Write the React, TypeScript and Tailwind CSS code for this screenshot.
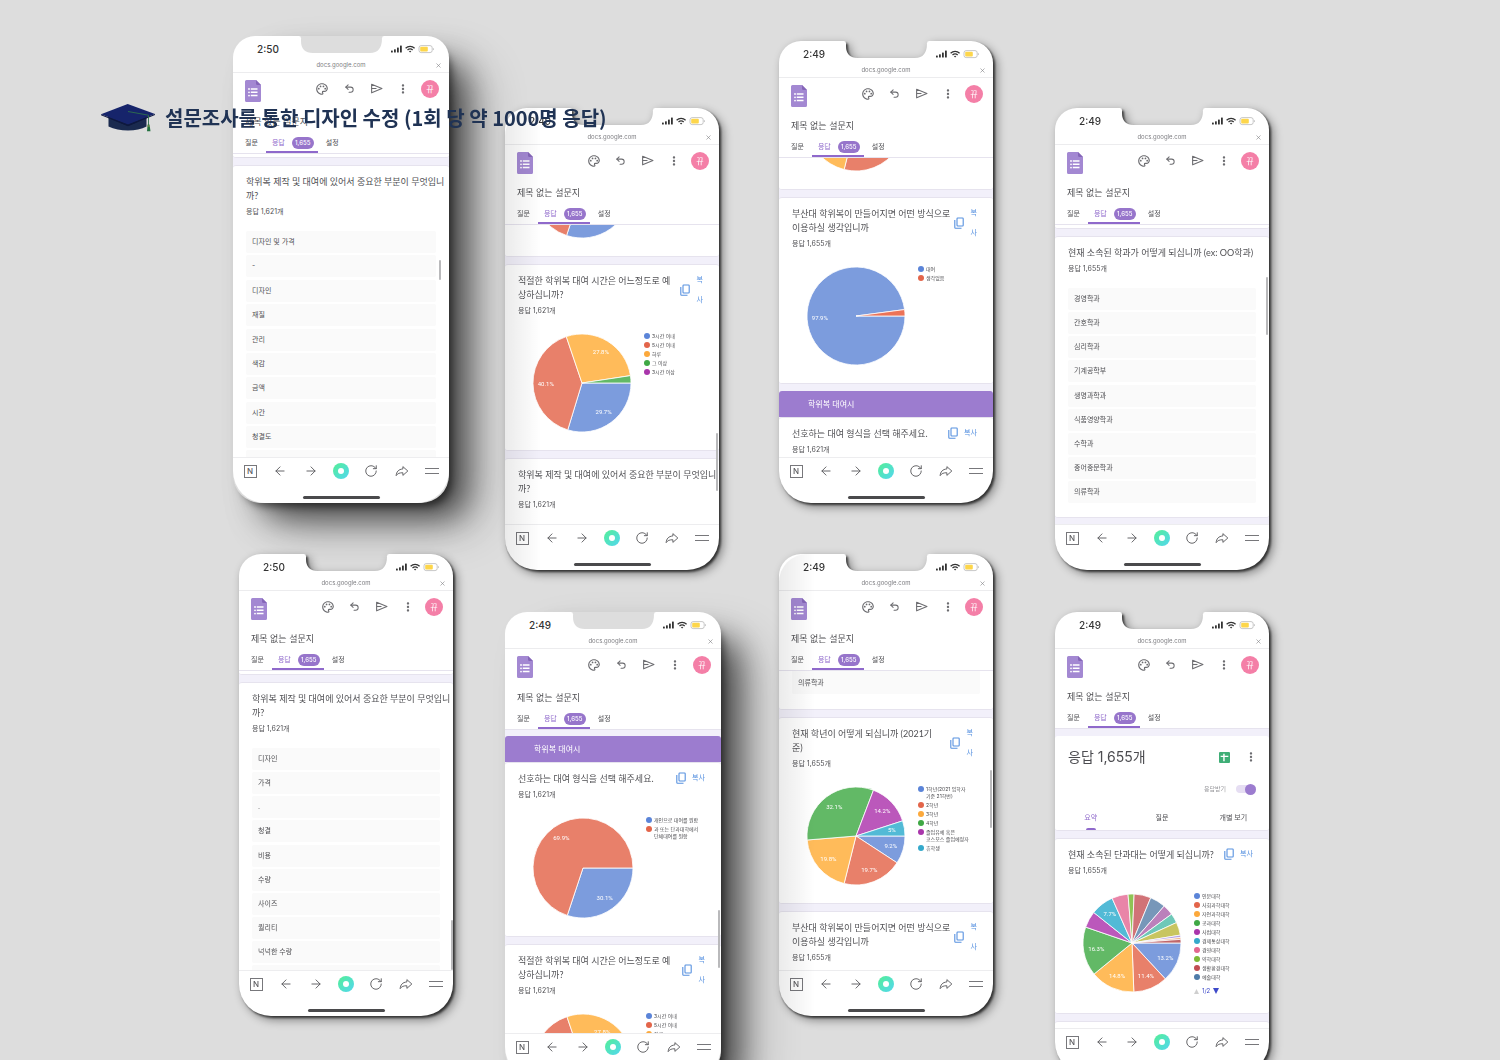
import React from "react";
import { ArrowLeft, ArrowRight, RotateCw, Undo2, X } from "lucide-react";
import { MdMoreVert, MdOutlinePalette } from "react-icons/md";

const BLUE = "#7c9cdd";
const RED = "#e8806a";
const ORANGE = "#ffbb5a";
const GREEN = "#62b966";
const PURPLE = "#bb58bb";
const CYAN = "#52bad6";

type Slice = { value: number; color: string; label?: string };
type LegendItem = { color: string; text: string };

const pieRental: Slice[] = [
  { value: 30.1, color: BLUE, label: "30.1%" },
  { value: 69.9, color: RED, label: "69.9%" },
];
const pieTime: Slice[] = [
  { value: 29.7, color: BLUE, label: "29.7%" },
  { value: 40.1, color: RED, label: "40.1%" },
  { value: 27.8, color: ORANGE, label: "27.8%" },
  { value: 2.4, color: GREEN },
];
const pieUsage: Slice[] = [
  { value: 97.9, color: BLUE, label: "97.9%" },
  { value: 2.1, color: "#ec7358" },
];
const pieGrade: Slice[] = [
  { value: 9.2, color: BLUE, label: "9.2%" },
  { value: 19.7, color: RED, label: "19.7%" },
  { value: 19.8, color: ORANGE, label: "19.8%" },
  { value: 32.1, color: GREEN, label: "32.1%" },
  { value: 14.2, color: PURPLE, label: "14.2%" },
  { value: 5, color: CYAN, label: "5%" },
];
const pieCollege: Slice[] = [
  { value: 13.2, color: BLUE, label: "13.2%" },
  { value: 11.4, color: RED, label: "11.4%" },
  { value: 14.8, color: ORANGE, label: "14.8%" },
  { value: 16.3, color: GREEN, label: "16.3%" },
  { value: 5.5, color: PURPLE },
  { value: 7.7, color: CYAN, label: "7.7%" },
  { value: 5.4, color: "#e985a8" },
  { value: 2, color: "#8fc455" },
  { value: 5.6, color: "#d17377" },
  { value: 5.2, color: "#7797b9" },
  { value: 3.6, color: "#bb80bb" },
  { value: 3.2, color: "#6fc8b8" },
  { value: 4.3, color: "#c8c560" },
  { value: 0.8, color: "#b3a0e6" },
  { value: 0.6, color: "#f0a878" },
  { value: 1.2, color: "#c0676b" },
];

const legendRental: LegendItem[] = [
  { color: "#5b84d8", text: "개인으로 대여를 원함" },
  { color: "#e3654a", text: "과 또는 단과대학에서\n단체대여를 원함" },
];
const legendTime: LegendItem[] = [
  { color: "#5b84d8", text: "3시간 이내" },
  { color: "#e3654a", text: "5시간 이내" },
  { color: "#fca93c", text: "하루" },
  { color: "#3fa845", text: "그 이상" },
  { color: "#a936ab", text: "3시간 이상" },
];
const legendUsage: LegendItem[] = [
  { color: "#5b84d8", text: "대여" },
  { color: "#e3654a", text: "생각없음" },
];
const legendGrade: LegendItem[] = [
  { color: "#5b84d8", text: "1학년(2021 입학자\n기준 21학번)" },
  { color: "#e3654a", text: "2학년" },
  { color: "#fca93c", text: "3학년" },
  { color: "#3fa845", text: "4학년" },
  { color: "#a936ab", text: "졸업유예 혹은\n코스모스 졸업예정자" },
  { color: "#35a9cb", text: "휴학생" },
];
const legendCollege: LegendItem[] = [
  { color: "#5b84d8", text: "인문대학" },
  { color: "#e3654a", text: "사회과학대학" },
  { color: "#fca93c", text: "자연과학대학" },
  { color: "#3fa845", text: "공과대학" },
  { color: "#a936ab", text: "사범대학" },
  { color: "#35a9cb", text: "경제통상대학" },
  { color: "#e3678f", text: "경영대학" },
  { color: "#7db936", text: "약학대학" },
  { color: "#c14d52", text: "생활환경대학" },
  { color: "#4f7ba8", text: "예술대학" },
];

function Pie({ slices, name, large }: { slices: Slice[]; name: string; large?: boolean }) {
  const R = 49;
  const total = slices.reduce((s, x) => s + x.value, 0);
  let acc = 0;
  const parts = slices.map((s) => {
    const a0 = (acc / total) * Math.PI * 2;
    acc += s.value;
    const a1 = (acc / total) * Math.PI * 2;
    return { ...s, a0, a1, mid: (a0 + a1) / 2 };
  });
  return (
    <svg
      viewBox="-49 -49 98 98"
      className={`shrink-0 ${large ? "size-[100px]" : "size-[98px]"}`}
      role="img"
      aria-label={name}
    >
      {parts.map((p, i) => (
        <path
          key={i}
          d={`M0 0L${R * Math.cos(p.a0)} ${R * Math.sin(p.a0)}A${R} ${R} 0 ${p.a1 - p.a0 > Math.PI ? 1 : 0} 1 ${R * Math.cos(p.a1)} ${R * Math.sin(p.a1)}Z`}
          fill={p.color}
          stroke="#fff"
          strokeWidth="0.8"
          strokeLinejoin="round"
        />
      ))}
      {parts.map((p, i) =>
        p.label ? (
          <text
            key={i}
            x={R * 0.74 * Math.cos(p.mid)}
            y={R * 0.74 * Math.sin(p.mid) + 2}
            textAnchor="middle"
            fill="#fff"
            className="font-['Roboto'] text-[6px]"
          >
            {p.label}
          </text>
        ) : null
      )}
    </svg>
  );
}

function FormsIcon() {
  return (
    <svg viewBox="0 0 16 22" className="h-[22px] w-4 shrink-0" role="img" aria-label="Forms">
      <path d="M1.500 0H11l5 5v15.500a1.500 1.500 0 0 1-1.500 1.500h-13A1.500 1.500 0 0 1 0 20.500v-19A1.500 1.500 0 0 1 1.500 0Z" fill="#a388d2" />
      <path d="M11 0l5 5h-3.500A1.500 1.500 0 0 1 11 3.500Z" fill="#8566b8" />
      <g fill="#fff">
        <path d="M5.800 8.200h6.700v1.500H5.800zM5.800 11.500h6.700V13H5.800zM5.800 14.800h6.700v1.500H5.800z" />
        <circle cx="4" cy="9" r=".9" />
        <circle cx="4" cy="12.300" r=".9" />
        <circle cx="4" cy="15.600" r=".9" />
      </g>
    </svg>
  );
}

function SendIcon() {
  return (
    <svg viewBox="0 0 24 24" className="size-[13px]" fill="none" stroke="currentColor" strokeWidth="2" strokeLinejoin="round" aria-hidden="true">
      <path d="M3 4l19 8-19 8Z" />
      <path d="M3 12h9" />
    </svg>
  );
}

function ShareIcon() {
  return (
    <svg viewBox="0 0 24 24" className="size-[14px]" fill="none" stroke="currentColor" strokeWidth="1.600" strokeLinejoin="round" aria-hidden="true">
      <path d="M13.500 4.500l8.500 7.500-8.500 7.500v-4.500C8 15 4.500 16 2 20c.4-6.500 4-11 11.500-11.500Z" />
    </svg>
  );
}

function StatusIcons() {
  return (
    <svg viewBox="0 0 43 10" className="ml-[9px] h-[10px] w-[43px]" role="img" aria-label="배터리 및 신호">
      <g fill="#333">
        <rect x="0" y="6.500" width="1.800" height="2" rx=".5" />
        <rect x="3" y="5.200" width="1.800" height="3.300" rx=".5" />
        <rect x="6" y="3.500" width="1.800" height="5" rx=".5" />
        <rect x="9" y="1.500" width="1.800" height="7" rx=".5" />
      </g>
      <g fill="none" stroke="#333" strokeWidth="1.300">
        <path d="M14.600 4.200a6.600 6.600 0 0 1 9 0" />
        <path d="M16.500 6.100a3.900 3.900 0 0 1 5.200 0" />
      </g>
      <path d="M17.900 7.300a1.900 1.900 0 0 1 2.400 0l-1.200 1.300Z" fill="#333" />
      <rect x="28" y="1.600" width="13.200" height="7" rx="2.200" fill="#fff" stroke="#b9b9b9" strokeWidth=".8" />
      <rect x="29.200" y="2.800" width="7.600" height="4.600" rx="1" fill="#fdd64b" />
      <path d="M42 4v2.200q.9-.4.9-1.100T42 4Z" fill="#b9b9b9" />
    </svg>
  );
}

function CopyIcon() {
  return (
    <svg viewBox="0 0 10 12" className="h-3 w-[10px]" fill="none" stroke="#5791e0" strokeWidth="1.100" aria-hidden="true">
      <rect x="3" y="1" width="6.200" height="8" rx=".7" />
      <path d="M.8 3v7.600q0 .7.7.7h6" />
    </svg>
  );
}

function CopyButton({ stacked, inset }: { stacked?: boolean; inset?: boolean }) {
  return (
    <button
      type="button"
      className={`flex shrink-0 items-center text-[7px] leading-5 text-[#5791e0] ${stacked ? "gap-[7px]" : "gap-[6px]"} ${inset ? "mr-5" : "mr-4"}`}
    >
      <CopyIcon />
      <span className="whitespace-pre">{stacked ? "복\n사" : "복사"}</span>
    </button>
  );
}

function Question({
  text,
  count,
  copy,
  inset,
}: {
  text: string;
  count: string;
  copy?: "row" | "stacked";
  inset?: boolean;
}) {
  return (
    <div className="flex items-start justify-between pt-[5px] pl-[13px]">
      <div className="pt-1">
        <h3 className="font-['Lato','Noto_Sans_CJK_KR',sans-serif] text-[9px] leading-[14px] whitespace-pre text-[#505054]">
          {text}
        </h3>
        <p className="mt-1 text-[7px] leading-[10px] whitespace-pre text-[#505054]">응답 {count}개</p>
      </div>
      {copy && <CopyButton stacked={copy === "stacked"} inset={inset} />}
    </div>
  );
}

function Card({ children, className = "" }: { children: React.ReactNode; className?: string }) {
  return <section className={`rounded-[3px] border-y border-[#e6e3ee] bg-white ${className}`}>{children}</section>;
}

function Gap() {
  return <div className="h-[7px] shrink-0" />;
}

function Chart({
  slices,
  legend,
  name,
  pager,
  large,
}: {
  slices: Slice[];
  legend: LegendItem[];
  name: string;
  pager?: boolean;
  large?: boolean;
}) {
  return (
    <div className="flex items-start gap-[13px] py-[18px] pl-7">
      <Pie slices={slices} name={name} large={large} />
      <div className="-mt-px flex flex-col">
        <ul className="flex flex-col gap-[2px]">
          {legend.map((l) => (
            <li key={l.text} className="flex gap-[2px] text-[5px] leading-[7px] whitespace-pre text-[#4a4a4e]">
              <span className="size-[6px] rounded-full" style={{ backgroundColor: l.color }} />
              {l.text}
            </li>
          ))}
        </ul>
        {pager && (
          <div className="mt-[6px] flex items-center gap-[3px] text-[6px] leading-[8px] text-[#3d49c9]">
            <button type="button" aria-label="이전">
              <svg viewBox="0 0 6 6" className="size-[5px]" aria-hidden="true">
                <path d="M3 0l3 6H0Z" fill="#cfcfcf" />
              </svg>
            </button>
            <span>1/2</span>
            <button type="button" aria-label="다음">
              <svg viewBox="0 0 6 6" className="size-[6px]" aria-hidden="true">
                <path d="M3 6l3-6H0Z" fill="#3d49c9" />
              </svg>
            </button>
          </div>
        )}
      </div>
    </div>
  );
}

/* Lower part of a chart that has been scrolled mostly out of view. */
function ScrolledChart({ slices, name }: { slices: Slice[]; name: string }) {
  return (
    <div className="rounded-b-[3px] border-b border-[#e6e3ee] bg-white pb-[18px] pl-7">
      <div className="flex h-[13px] items-end overflow-hidden">
        <Pie slices={slices} name={name} />
      </div>
    </div>
  );
}

function SectionBanner() {
  return (
    <h2 className="flex h-[26px] items-center rounded-t-[3px] bg-[#9c7ccf] pl-[29px] text-[8px] leading-[12px] text-white">
      학위복 대여시
    </h2>
  );
}

function AnswerList({ items, tall }: { items: string[]; tall?: boolean }) {
  return (
    <ul className={`mx-[13px] mt-[14px] flex flex-col justify-between ${tall ? "h-[217px]" : "h-[215px]"}`}>
      {items.map((t) => (
        <li key={t} className="flex h-[22px] items-center rounded-[2px] bg-[#fafafa] pl-[6px] text-[7px] leading-[10px] text-[#505054]">
          {t}
        </li>
      ))}
    </ul>
  );
}

function Strip() {
  return <div className="h-[4px] rounded-b-[3px] border-b border-[#e6e3ee] bg-white" />;
}

type PhoneProps = {
  time: string;
  large?: boolean;
  shaded?: boolean;
  scroll?: string;
  className?: string;
  children: React.ReactNode;
};

function Phone({ time, large, shaded, scroll, className = "", children }: PhoneProps) {
  return (
    <article
      className={`relative shrink-0 rounded-[28px] font-['Inter','Noto_Sans_CJK_KR',sans-serif] ${
        large
          ? "w-[216px] bg-[#dddddd] shadow-[5px_6px_8px_-3px_rgba(0,0,0,0.55),22px_20px_32px_-6px_rgba(0,0,0,0.6),34px_26px_50px_-6px_rgba(0,0,0,0.3)]"
          : "w-[214px] [filter:drop-shadow(2px_2px_1px_rgba(0,0,0,0.65))_drop-shadow(3px_3px_4px_rgba(0,0,0,0.4))]"
      } ${className}`}
    >
      <div className="flex h-[22px]">
        <div className="flex flex-1 items-center rounded-tl-[28px] rounded-tr-[3px] bg-white">
          <span className="mt-1 ml-6 text-[10px] leading-3 font-medium text-[#333]">{time}</span>
        </div>
        <svg viewBox="0 0 81 22" className="h-[22px] w-[81px]" aria-hidden="true">
          <path d="M0 2V22H81V2Q81 17 69 17H12Q0 17 0 5Z" fill="#fff" />
        </svg>
        <div className="flex flex-1 items-center rounded-tl-[3px] rounded-tr-[28px] bg-white">
          <div className="mt-1">
            <StatusIcons />
          </div>
        </div>
      </div>

      <div className="overflow-hidden rounded-b-[32px] bg-white">
        <div className="grid h-[15px] grid-cols-[1fr_auto_1fr] items-center border-b border-[#ececee] pr-[7px]">
          <span />
          <span className="pl-[7px] text-[6px] leading-[8px] text-[#7e7e82]">docs.google.com</span>
          <button type="button" aria-label="닫기" className="justify-self-end">
            <X className="size-[7px] text-[#7e7e82]" strokeWidth={2} />
          </button>
        </div>

        <header>
          <div className="flex h-[31px] items-center pl-3 text-[#6c6c70]">
            <div className="pt-1">
              <FormsIcon />
            </div>
            <div className="flex flex-1 items-center justify-between pr-[10px] pl-[52px]">
              <button type="button" aria-label="테마 맞춤설정" className="flex w-[18px] justify-center">
                <MdOutlinePalette className="size-[14px]" />
              </button>
              <button type="button" aria-label="실행취소" className="flex w-[18px] justify-center">
                <Undo2 className="size-[11px]" strokeWidth={2.2} />
              </button>
              <button type="button" aria-label="보내기" className="flex w-[18px] justify-center">
                <SendIcon />
              </button>
              <button type="button" aria-label="더보기" className="flex w-[18px] justify-center">
                <MdMoreVert className="size-[14px]" />
              </button>
              <button
                type="button"
                className="flex size-[18px] items-center justify-center rounded-full bg-[#f47fa7] text-[8px] leading-[10px] text-white"
              >
                뀨
              </button>
            </div>
          </div>
          <h2 className={`flex items-center pt-px pl-3 text-[9px] leading-[13px] text-[#505054] ${large ? "h-[33px]" : "h-8"}`}>
            제목 없는 설문지
          </h2>
          <nav className="flex h-[17px] items-stretch border-b border-[#e6e3ee] pl-3 text-[7px] leading-[10px] text-[#505054]">
            <button type="button" className="pb-[4px]">
              질문
            </button>
            <button
              type="button"
              className="ml-[8px] flex items-center gap-[7px] border-b-2 border-[#8f69cb] pr-[4px] pb-[2px] pl-[6px] text-[#8f69cb]"
            >
              응답
              <span className="flex h-[12px] w-[22px] items-center justify-center rounded-full bg-[#9775cb] text-[6px] leading-[8px] font-medium text-white">
                1,655
              </span>
            </button>
            <button type="button" className="ml-[8px] pb-[4px]">
              설정
            </button>
          </nav>
        </header>

        <div className={`relative overflow-hidden bg-[#f2f0fa] ${large ? "h-[303px]" : "h-[299px]"}`}>
          {children}
          {scroll && <span className={`absolute w-[2px] rounded-full bg-[#b9b9bb] ${scroll}`} />}
        </div>

        <footer className="h-[46px] border-t border-[#ededef]">
          <div className="flex h-[26px] items-center justify-between px-[9px] text-[#5b5b5f]">
            <button type="button" className="flex w-4 justify-center">
              <span className="flex size-[13px] items-center justify-center border border-[#77777b] text-[8px] leading-[10px] font-medium">
                N
              </span>
            </button>
            <button type="button" aria-label="뒤로" className="flex w-4 justify-center">
              <ArrowLeft className="size-[14px]" strokeWidth={1.6} />
            </button>
            <button type="button" aria-label="앞으로" className="flex w-4 justify-center">
              <ArrowRight className="size-[14px]" strokeWidth={1.6} />
            </button>
            <button type="button" aria-label="홈" className="flex w-4 justify-center">
              <span className="flex size-4 items-center justify-center rounded-full bg-linear-to-br from-[#55ee93] to-[#54d6ee]">
                <span className="size-[6px] rounded-full bg-white" />
              </span>
            </button>
            <button type="button" aria-label="새로고침" className="flex w-4 justify-center">
              <RotateCw className="size-[14px]" strokeWidth={1.6} />
            </button>
            <button type="button" aria-label="공유" className="flex w-4 justify-center">
              <ShareIcon />
            </button>
            <button type="button" aria-label="메뉴" className="flex w-4 flex-col gap-[4px] px-px">
              <span className="h-px bg-[#77777b]" />
              <span className="h-px bg-[#77777b]" />
            </button>
          </div>
          <div className="mx-auto mt-[12px] h-[3px] w-[77px] rounded-full bg-[#4a4a4c]" />
        </footer>
      </div>

      {shaded && (
        <div className="pointer-events-none absolute inset-0 overflow-hidden rounded-[28px]">
          <div className="h-full w-9 bg-linear-to-r from-black/8 to-transparent" />
        </div>
      )}
    </article>
  );
}

function ResponseSummary() {
  return (
    <section className="flex h-[95px] flex-col rounded-[3px] border-b border-[#e6e3ee] bg-white">
      <div className="flex items-center pt-[11px] pr-[11px] pl-[13px]">
        <h2 className="flex-1 text-[14px] leading-5 text-[#4c4c50]">응답 1,655개</h2>
        <button type="button" aria-label="스프레드시트에서 보기" className="mr-[14px]">
          <svg viewBox="0 0 10 10" className="size-[11px]" aria-hidden="true">
            <rect width="10" height="10" rx="1" fill="#3fae76" />
            <path d="M1.500 4h7M4.500 1.500v7" stroke="#fff" strokeWidth="1.300" />
          </svg>
        </button>
        <button type="button" aria-label="더보기" className="text-[#6c6c70]">
          <MdMoreVert className="size-[14px]" />
        </button>
      </div>
      <label className="mt-4 mr-[13px] flex items-center justify-end gap-[10px] text-[6px] leading-[12px] text-[#98989c]">
        응답받기
        <span className="relative flex h-[11px] w-5 items-center">
          <input type="checkbox" defaultChecked className="peer absolute inset-0 opacity-0" />
          <span className="h-2 w-full rounded-full bg-[#e6def3]" />
          <span className="absolute right-0 size-[11px] rounded-full bg-[#9c7ccf]" />
        </span>
      </label>
      <nav className="mt-auto grid h-[17px] grid-cols-3 text-[7px] leading-[10px] text-[#4c4c50]">
        <button type="button" className="flex flex-col items-center justify-between text-[#8f69cb]">
          요약
          <span className="h-[2px] w-[10px] rounded-t-full bg-[#8f69cb]" />
        </button>
        <button type="button" className="flex justify-center">
          질문
        </button>
        <button type="button" className="flex justify-center">
          개별 보기
        </button>
      </nav>
    </section>
  );
}

function GraduationCap() {
  return (
    <svg viewBox="0 0 56 30" className="h-[30px] w-14 shrink-0" aria-hidden="true">
      <path d="M8.500 13v10.500Q17 27.500 28 27.500T46.500 23.500V13Z" fill="#1a2a4f" />
      <path d="M8.500 14.500L28 22.500l18.500-8" fill="none" stroke="#0f1a38" strokeWidth="1.200" />
      <path d="M1 11.200L27.700 1 55 11 28 21.500Z" fill="#16246b" />
      <path d="M1 11.200L28 21.500 55 11v1L28 23 1 12.200Z" fill="#0e1840" />
      <path d="M28 8.500l20.500 3.700v11" fill="none" stroke="#2e6f4c" strokeWidth=".9" />
      <path d="M47.600 21.500h1.900l1 6.800h-3.500Z" fill="#23713f" />
      <path d="M47.400 23h2.200" stroke="#d6b34c" strokeWidth=".6" />
    </svg>
  );
}

const q = {
  important: "학위복 제작 및 대여에 있어서 중요한 부분이 무엇입니\n까?",
  time: "적절한 학위복 대여 시간은 어느정도로 예\n상하십니까?",
  usage: "부산대 학위복이 만들어지면 어떤 방식으로\n이용하실 생각입니까",
  rental: "선호하는 대여 형식을 선택 해주세요.",
  major: "현재 소속된 학과가 어떻게 되십니까 (ex: OO학과)",
  grade: "현재 학년이 어떻게 되십니까 (2021기\n준)",
  college: "현재 소속된 단과대는 어떻게 되십니까?",
};

export default function App() {
  return (
    <main className="relative h-screen overflow-hidden bg-[#dddddd] font-['Noto_Sans_CJK_KR',sans-serif]">
      <div className="flex items-start justify-center pl-[2px]">
        <div className="flex w-[220px] shrink-0 flex-col gap-[51px] pt-9">
          <Phone time="2:50" large scroll="right-2 top-[106px] h-5">
            <Strip />
            <Gap />
            <Card>
              <Question text={q.important} count="1,621" />
              <AnswerList tall items={["디자인 및 가격", "-", "디자인", "재질", "관리", "색감", "금액", "시간", "청결도"]} />
              <div className="mx-[13px] mt-[2px] h-[22px] rounded-[2px] bg-[#fafafa]" />
            </Card>
          </Phone>
          <Phone time="2:50" className="ml-[6px]" scroll="right-0 top-[249px] h-[50px]">
            <Strip />
            <Gap />
            <Card>
              <Question text={q.important} count="1,621" />
              <AnswerList items={["디자인", "가격", ".", "청결", "비용", "수량", "사이즈", "퀄리티", "넉넉한 수량"]} />
              <div className="mx-[13px] mt-[2px] h-[22px] rounded-[2px] bg-[#fafafa]" />
            </Card>
          </Phone>
        </div>

        <div className="ml-[52px] flex w-[216px] shrink-0 flex-col gap-[42px] pt-[108px]">
          <Phone time="2:49" shaded scroll="right-[1px] top-[208px] h-[58px]">
            <ScrolledChart slices={pieRental} name="대여 형식" />
            <Gap />
            <Card>
              <Question text={q.time} count="1,621" copy="stacked" />
              <Chart slices={pieTime} legend={legendTime} name="대여 시간" />
            </Card>
            <Gap />
            <Card className="pb-5">
              <Question text={q.important} count="1,621" />
            </Card>
          </Phone>
          <Phone time="2:49" large scroll="right-[1px] top-[180px] h-[58px]">
            <div className="h-[6px]" />
            <SectionBanner />
            <Card>
              <Question text={q.rental} count="1,621" copy="row" />
              <Chart large slices={pieRental} legend={legendRental} name="대여 형식" />
            </Card>
            <Gap />
            <Card>
              <Question text={q.time} count="1,621" copy="stacked" />
              <Chart large slices={pieTime} legend={legendTime} name="대여 시간" />
            </Card>
          </Phone>
        </div>

        <div className="ml-[58px] flex w-[214px] shrink-0 flex-col gap-[51px] pt-[41px]">
          <Phone time="2:49">
            <ScrolledChart slices={pieGrade} name="학년" />
            <Gap />
            <Card>
              <Question text={q.usage} count="1,655" copy="stacked" />
              <Chart slices={pieUsage} legend={legendUsage} name="이용 방식" />
            </Card>
            <Gap />
            <SectionBanner />
            <Card>
              <Question text={q.rental} count="1,621" copy="row" />
              <Chart slices={pieRental} legend={legendRental} name="대여 형식" />
            </Card>
          </Phone>
          <Phone time="2:49" shaded scroll="right-[1px] top-[99px] h-[58px]">
            <div className="rounded-b-[3px] border-b border-[#e6e3ee] bg-white px-[13px] pb-[15px]">
              <p className="flex h-[23px] items-center rounded-b-[2px] bg-[#fafafa] pl-[6px] text-[7px] leading-[10px] text-[#505054]">
                의류학과
              </p>
            </div>
            <Gap />
            <Card>
              <Question text={q.grade} count="1,655" copy="stacked" inset />
              <Chart slices={pieGrade} legend={legendGrade} name="학년" />
            </Card>
            <Gap />
            <Card className="pb-5">
              <Question text={q.usage} count="1,655" copy="stacked" />
            </Card>
          </Phone>
        </div>

        <div className="ml-[62px] flex w-[214px] shrink-0 flex-col gap-[42px] pt-[108px]">
          <Phone time="2:49" scroll="right-[1px] top-[52px] h-[58px]">
            <Strip />
            <Gap />
            <Card className="pb-[14px]">
              <Question text={q.major} count="1,655" />
              <AnswerList
                items={["경영학과", "간호학과", "심리학과", "기계공학부", "생명과학과", "식품영양학과", "수학과", "중어중문학과", "의류학과"]}
              />
            </Card>
          </Phone>
          <Phone time="2:49">
            <Gap />
            <ResponseSummary />
            <Gap />
            <Card>
              <Question text={q.college} count="1,655" copy="row" />
              <Chart slices={pieCollege} legend={legendCollege} name="단과대" pager />
            </Card>
            <Gap />
            <Card className="h-10">{null}</Card>
          </Phone>
        </div>
      </div>

      <h1 className="absolute top-[103px] left-[100px] flex items-center gap-[9px] text-[20px] leading-[30px] font-bold whitespace-nowrap text-[#203354]">
        <GraduationCap />
        설문조사를 통한 디자인 수정 (1회 당 약 1000명 응답)
      </h1>
    </main>
  );
}
